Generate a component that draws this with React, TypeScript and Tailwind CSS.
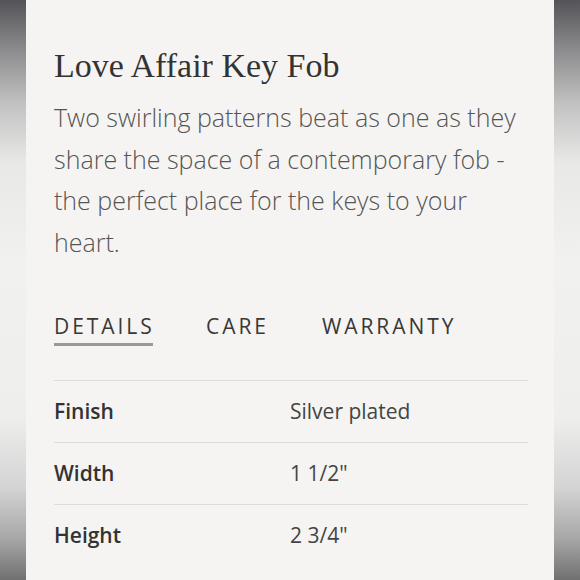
const specs = [
  { label: "Finish", value: "Silver plated" },
  { label: "Width", value: "1 1/2\"" },
  { label: "Height", value: "2 3/4\"" },
]

function Edge() {
  return (
    <div className="w-[26px] shrink-0 bg-[linear-gradient(to_bottom,#545458_0%,#8e8e90_9%,#c2c2c2_18%,#e8e8e7_28%,#f1f1f0_45%,#eeeeed_72%,#d4d4d4_84%,#a6a6a6_93%,#707070_100%)]" />
  )
}

export default function App() {
  return (
    <div className="flex h-[580px] w-[580px] overflow-hidden">
      <Edge />
      <div className="flex-1 bg-[#f5f4f2] pl-[28px] pr-[26px] pt-[44px]">
        <h1 className="font-['Liberation_Serif',serif] text-[34px] leading-[44px] text-[#333]">
          Love Affair Key Fob
        </h1>
        <p className="mt-[9px] font-['Open_Sans',sans-serif] text-[25px] font-light leading-[41.5px] text-[#555]">
          Two swirling patterns beat as one as they share the space of a contemporary fob - the perfect place for the keys to your heart.
        </p>

        {/* Tabs */}
        <div className="mt-[48px] flex font-['Open_Sans',sans-serif] text-[21px] font-medium tracking-[0.14em] text-[#383838]">
          <div className="w-[99px] whitespace-nowrap border-b-[3px] border-[#999] pb-[2px] leading-[30px]">DETAILS</div>
          <div className="ml-[53px] leading-[30px]">CARE</div>
          <div className="ml-[53px] leading-[30px]">WARRANTY</div>
        </div>

        {/* Spec table */}
        <div className="mt-[34px] border-t border-[#dcdcda] font-['Open_Sans',sans-serif] text-[21px] text-[#333]">
          {specs.map((s, i) => (
            <div
              key={s.label}
              className={
                i < specs.length - 1
                  ? "flex h-[62px] items-center border-b border-[#dcdcda]"
                  : "flex h-[62px] items-center"
              }
            >
              <div className="w-[236px] font-semibold">{s.label}</div>
              <div className="text-[#444]">{s.value}</div>
            </div>
          ))}
        </div>
      </div>
      <Edge />
    </div>
  )
}
